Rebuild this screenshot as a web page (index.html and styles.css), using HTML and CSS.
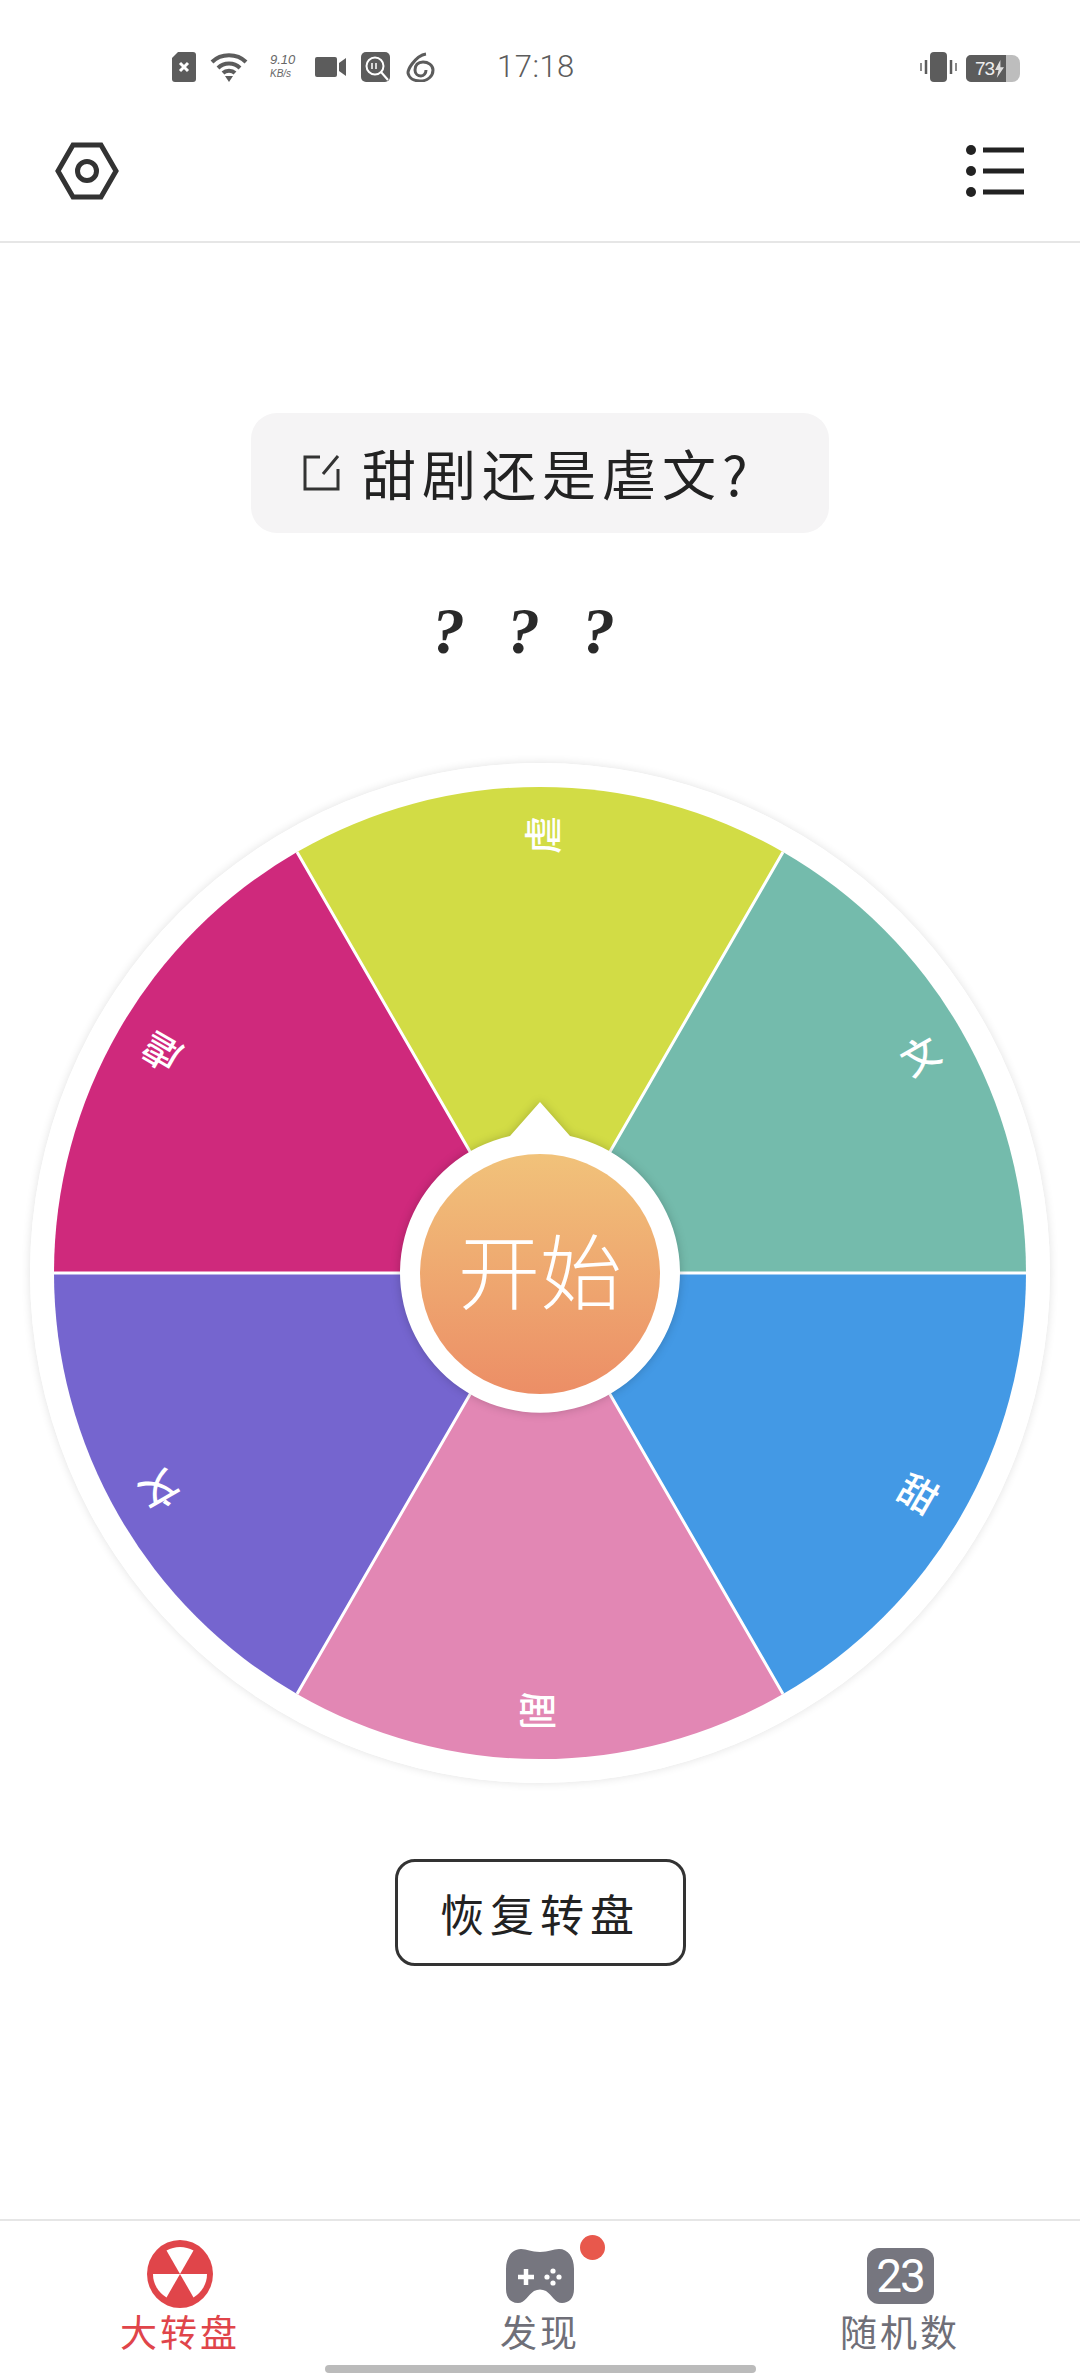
FILE: index.html
```html
<!DOCTYPE html>
<html lang="zh-CN">
<head>
  <meta charset="UTF-8">
  <meta name="viewport" content="width=device-width, initial-scale=1.0">
  <title>大转盘</title>
  <link rel="stylesheet" href="styles.css">
</head>
<body>
  <div class="status-bar">
    <svg class="ic-sim" viewBox="0 0 24 30">
      <path d="M6 0H21a3 3 0 0 1 3 3V27a3 3 0 0 1-3 3H3a3 3 0 0 1-3-3V6Z" fill="#5c5c5c"/>
      <path d="M8 11l8 8M16 11l-8 8" stroke="#fff" stroke-width="3"/>
    </svg>
    <svg class="ic-wifi" viewBox="0 0 38 30">
      <g fill="none" stroke="#5c5c5c" stroke-width="4">
        <path d="M2 10C11 1 27 1 36 10"/>
        <path d="M8 16C14 10 24 10 30 16"/>
        <path d="M13 21C16 18 22 18 25 21"/>
      </g>
      <path d="M15 24H23L19 30Z" fill="#5c5c5c"/>
    </svg>
    <div class="speed"><span>9.10</span><span class="speed-unit">KB/s</span></div>
    <svg class="ic-camera" viewBox="0 0 31 20">
      <rect x="0" y="0" width="22" height="20" rx="2" fill="#5c5c5c"/>
      <path d="M24 6L31 1V19L24 14Z" fill="#5c5c5c"/>
    </svg>
    <svg class="ic-search" viewBox="0 0 29 30">
      <rect width="29" height="30" rx="5" fill="#5c5c5c"/>
      <circle cx="14" cy="14" r="8.5" fill="none" stroke="#fff" stroke-width="2"/>
      <path d="M20 20l7 8" stroke="#fff" stroke-width="2"/>
      <path d="M11 11v6M15 11v6" stroke="#fff" stroke-width="1.5"/>
    </svg>
    <svg class="ic-swirl" viewBox="0 0 29 30">
      <path d="M20 2C13 3 9 8 6 12C3 16 2 19 2 21C3 26 8 29 14 29C22 29 27 24 27 18C27 13 22 10 17 10C12 10 9 13 9 18C9 22 12 24 15 24C18 24 20 21 20 18" fill="none" stroke="#5c5c5c" stroke-width="3"/>
    </svg>
    <div class="clock">17:18</div>
    <div class="status-right">
      <svg class="ic-vibrate" viewBox="0 0 37 30">
        <rect x="10" y="0" width="17" height="30" rx="4" fill="#5c5c5c"/>
        <path d="M6 8V22M31 8V22" stroke="#5c5c5c" stroke-width="2.5"/>
        <path d="M1 11V19M36 11V19" stroke="#8a8a8a" stroke-width="2"/>
      </svg>
      <div class="battery">
        <div class="battery-fill">
          <span>73</span>
          <svg class="ic-bolt" viewBox="0 0 10 20">
            <path d="M6 0L0 11H4L2 20L10 8H6Z" fill="#ddd"/>
          </svg>
        </div>
      </div>
    </div>
  </div>

  <header class="top-bar">
    <svg class="ic-hex" viewBox="0 0 64 58">
      <path d="M18 3H46L61 29L46 55H18L3 29Z" fill="none" stroke="#333" stroke-width="5"/>
      <circle cx="32" cy="29" r="9.5" fill="none" stroke="#333" stroke-width="5"/>
    </svg>
    <svg class="ic-menu" viewBox="0 0 58 52">
      <circle cx="5" cy="5" r="5" fill="#222"/>
      <circle cx="5" cy="26" r="5" fill="#222"/>
      <circle cx="5" cy="47" r="5" fill="#222"/>
      <path d="M17 5H58M17 26H58M17 47H58" stroke="#222" stroke-width="5"/>
    </svg>
  </header>

  <main>
    <div class="question">
      <svg class="ic-edit" viewBox="0 0 37 36">
        <path d="M17 2H2V34H35V14M35 1L20 19" fill="none" stroke="#333" stroke-width="3"/>
      </svg>
      <span>甜剧还是虐文?</span>
    </div>

    <div class="result"><span>?</span><span>?</span><span>?</span></div>

    <div class="wheel">
      <svg class="wheel-svg" viewBox="-510 -510 1020 1020">
        <circle r="510" fill="#fff"/>
        <path d="M0 0L-243 -421A486 486 0 0 1 243 -421Z" fill="#d2dc45"/>
        <path d="M0 0L243 -421A486 486 0 0 1 486 0Z" fill="#74bbac"/>
        <path d="M0 0L486 0A486 486 0 0 1 243 421Z" fill="#4399e5"/>
        <path d="M0 0L243 421A486 486 0 0 1 -243 421Z" fill="#e287b4"/>
        <path d="M0 0L-243 421A486 486 0 0 1 -486 0Z" fill="#7565cf"/>
        <path d="M0 0L-486 0A486 486 0 0 1 -243 -421Z" fill="#cf297c"/>
        <path d="M-243 -421L243 421M243 -421L-243 421M-486 0H486" stroke="#fff" stroke-width="3"/>
        <g class="wheel-labels">
          <text transform="rotate(0) translate(0 -438) rotate(-90)">虐</text>
          <text transform="rotate(60) translate(0 -438) rotate(-90)">文</text>
          <text transform="rotate(120) translate(0 -438) rotate(-90)">甜</text>
          <text transform="rotate(180) translate(0 -438) rotate(-90)">剧</text>
          <text transform="rotate(240) translate(0 -438) rotate(-90)">文</text>
          <text transform="rotate(300) translate(0 -438) rotate(-90)">虐</text>
        </g>
        <path class="hub" d="M0 -171L30 -137A140 140 0 1 1 -30 -137Z" fill="#fff"/>
      </svg>
      <button class="start">开始</button>
    </div>

    <button class="restore">恢复转盘</button>
  </main>

  <footer class="tab-bar">
    <div class="tabs">
      <div class="tab tab-active">
        <div class="tab-icon">
          <svg class="ic-wheel" viewBox="-33 -34 66 68">
            <circle r="33" fill="#e0454a" transform="scale(1 1.03)"/>
            <path d="M0 0L-13.5 -23.4A27 27 0 0 1 13.5 -23.4Z" fill="#fff"/>
            <path d="M0 0L27 0A27 27 0 0 1 13.5 23.4Z" fill="#fff"/>
            <path d="M0 0L-13.5 23.4A27 27 0 0 1 -27 0Z" fill="#fff"/>
          </svg>
        </div>
        <span>大转盘</span>
      </div>
      <div class="tab">
        <div class="tab-icon">
          <svg class="ic-pad" viewBox="0 0 70 54">
            <path d="M16 0C22 0 26 3 35 3C44 3 48 0 54 0C63 0 69 8 69 20V40C69 49 64 54 57 54C50 54 47 46 41 42C37 40 33 40 29 42C23 46 20 54 13 54C6 54 1 49 1 40V20C1 8 7 0 16 0Z" fill="#76767f"/>
            <path d="M21 20V36M13 28H29" stroke="#fff" stroke-width="4.5"/>
            <g fill="#fff">
              <circle cx="48" cy="22" r="2.6"/>
              <circle cx="48" cy="34" r="2.6"/>
              <circle cx="42" cy="28" r="2.6"/>
              <circle cx="54" cy="28" r="2.6"/>
            </g>
          </svg>
          <i class="badge"></i>
        </div>
        <span>发现</span>
      </div>
      <div class="tab">
        <div class="tab-icon">
          <div class="num-tile">23</div>
        </div>
        <span>随机数</span>
      </div>
    </div>
    <div class="home-bar"></div>
  </footer>
</body>
</html>
```

FILE: styles.css
```css
* {
  box-sizing: border-box;
}

body {
  margin: 0;
  width: 1080px;
  height: 2376px;
  overflow: hidden;
  display: flex;
  flex-direction: column;
  background-color: #fff;
  color: #222;
  font-family: "Noto Sans CJK SC", "Noto Sans", sans-serif;
}

svg {
  display: block;
  flex: none;
}

/* status bar */
.status-bar {
  height: 92px;
  padding: 52px 60px 0 172px;
  display: flex;
  align-items: flex-start;
}

.ic-sim {
  width: 24px;
  height: 30px;
}

.ic-wifi {
  width: 38px;
  height: 30px;
  margin-left: 14px;
}

.speed {
  width: 30px;
  margin-left: 22px;
  display: flex;
  flex-direction: column;
  font-family: "Liberation Sans", sans-serif;
  font-size: 13px;
  line-height: 15px;
  font-style: italic;
  color: #666;
}

.speed-unit {
  font-size: 10px;
  line-height: 14px;
}

.ic-camera {
  width: 31px;
  height: 20px;
  margin: 5px 0 0 15px;
}

.ic-search {
  width: 29px;
  height: 30px;
  margin-left: 15px;
}

.ic-swirl {
  width: 29px;
  height: 30px;
  margin-left: 16px;
}

.clock {
  margin-left: 62px;
  font-family: Roboto, sans-serif;
  font-weight: 300;
  font-size: 31px;
  line-height: 30px;
  letter-spacing: 0.5px;
  color: #5c5c5c;
}

.status-right {
  margin-left: auto;
  display: flex;
  gap: 9px;
}

.ic-vibrate {
  width: 37px;
  height: 30px;
}

.battery {
  width: 54px;
  height: 27px;
  margin-top: 3px;
  border-radius: 5px 8px 8px 5px;
  background-color: #bdbdbd;
  overflow: hidden;
}

.battery-fill {
  width: 40px;
  height: 27px;
  padding-left: 9px;
  display: flex;
  align-items: center;
  background-color: #5c5c5c;
  color: #eee;
  font-family: "Liberation Sans", sans-serif;
  font-size: 19px;
  line-height: 27px;
  letter-spacing: -1px;
}

.ic-bolt {
  width: 9px;
  height: 18px;
  margin-left: 1px;
}

/* top bar */
.top-bar {
  height: 151px;
  padding: 8px 56px 0 55px;
  display: flex;
  justify-content: space-between;
  align-items: center;
  border-bottom: 2px solid #e6e6e6;
}

.ic-hex {
  width: 64px;
  height: 58px;
}

.ic-menu {
  width: 58px;
  height: 52px;
}

/* main */
main {
  flex: 1;
  display: flex;
  flex-direction: column;
  align-items: center;
}

.question {
  margin-top: 170px;
  width: 578px;
  height: 120px;
  padding-left: 52px;
  display: flex;
  align-items: center;
  gap: 22px;
  border-radius: 26px;
  background-color: #f5f4f5;
}

.ic-edit {
  width: 37px;
  height: 36px;
}

.question span {
  font-size: 54px;
  letter-spacing: 6px;
  line-height: 60px;
  white-space: nowrap;
}

.result {
  margin-top: 74px;
  margin-right: 36px;
  height: 48px;
  display: flex;
  gap: 45px;
  font-family: "Liberation Serif", serif;
  font-style: italic;
  font-weight: bold;
  font-size: 66px;
  line-height: 48px;
  color: #2a2a2a;
}

.result span {
  width: 30px;
  text-align: center;
}

.wheel {
  position: relative;
  margin-top: 108px;
  width: 1020px;
  height: 1020px;
  flex: none;
  border-radius: 50%;
  box-shadow: 0 0 10px rgba(0, 0, 0, 0.12);
}

.wheel-svg {
  width: 1020px;
  height: 1020px;
}

.wheel-labels text {
  fill: #fff;
  font-size: 38px;
  font-weight: 500;
  text-anchor: middle;
  dominant-baseline: central;
}

.hub {
  filter: drop-shadow(0 0 5px rgba(0, 0, 0, 0.2));
}

.start {
  position: absolute;
  left: 390px;
  top: 391px;
  width: 240px;
  height: 240px;
  padding: 0 0 12px;
  border: none;
  border-radius: 50%;
  background: linear-gradient(#f1c27a, #ec8e66);
  color: #fff;
  font-family: inherit;
  font-size: 82px;
  font-weight: 300;
  line-height: 1;
}

.restore {
  margin-top: 76px;
  width: 291px;
  height: 107px;
  padding: 0;
  border: 3px solid #333;
  border-radius: 20px;
  background-color: #fff;
  color: #222;
  font-family: inherit;
  font-size: 44px;
  letter-spacing: 6px;
}

/* bottom tabs */
.tab-bar {
  height: 157px;
  display: flex;
  flex-direction: column;
  border-top: 2px solid #e6e6e6;
}

.tabs {
  flex: 1;
  display: flex;
}

.tab {
  flex: 1;
  padding-top: 17px;
  display: flex;
  flex-direction: column;
  align-items: center;
  font-size: 37px;
  line-height: 40px;
  color: #6f6f78;
}

.tab span {
  margin-top: 1px;
  letter-spacing: 3px;
}

.tab-active {
  color: #e0454a;
}

.tab-icon {
  position: relative;
  height: 72px;
  display: flex;
  align-items: center;
  justify-content: center;
}

.ic-wheel {
  width: 66px;
  height: 68px;
}

.ic-pad {
  width: 70px;
  height: 54px;
  margin-top: 4px;
}

.badge {
  position: absolute;
  left: 75px;
  top: -3px;
  width: 25px;
  height: 25px;
  border-radius: 50%;
  background-color: #e8584c;
}

.num-tile {
  width: 67px;
  height: 56px;
  margin-top: 4px;
  border-radius: 12px;
  background-color: #76767f;
  color: #fff;
  font-family: Roboto, sans-serif;
  font-size: 46px;
  line-height: 56px;
  letter-spacing: -2px;
  text-align: center;
}

.home-bar {
  width: 431px;
  height: 8px;
  margin: 0 auto 3px;
  border-radius: 4px;
  background-color: #bbb;
}
```
